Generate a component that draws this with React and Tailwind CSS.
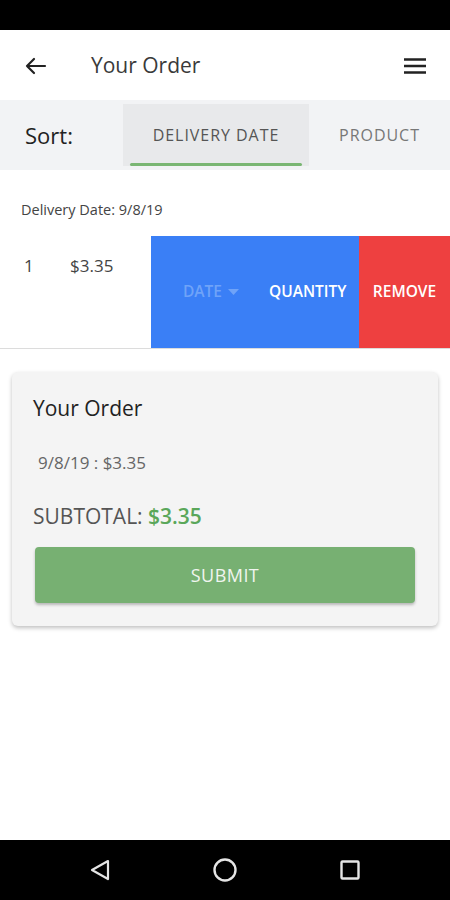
import { useState } from "react";

const font = { fontFamily: '"Open Sans", "Noto Sans", sans-serif' };

const BackArrow = () => (
  <svg width="22" height="18" viewBox="0 0 22 18" fill="none" stroke="#222" strokeWidth="2.2" strokeLinecap="round" strokeLinejoin="round">
    <path d="M20 9H2M9 2L2 9l7 7" />
  </svg>
);

const Hamburger = () => (
  <svg width="24" height="18" viewBox="0 0 24 18" fill="none" stroke="#222" strokeWidth="2.4">
    <path d="M1 2.5h22M1 9h22M1 15.5h22" />
  </svg>
);

const NavBar = () => (
  <div className="h-[60px] bg-black flex items-center justify-between px-[88px]">
    <svg width="24" height="24" viewBox="0 0 24 24" fill="none" stroke="#e5e5e5" strokeWidth="2.2" strokeLinejoin="round">
      <path d="M20 3L4 12l16 9z" />
    </svg>
    <svg width="26" height="26" viewBox="0 0 26 26" fill="none" stroke="#e5e5e5" strokeWidth="2.4">
      <circle cx="13" cy="13" r="10.5" />
    </svg>
    <svg width="24" height="24" viewBox="0 0 24 24" fill="none" stroke="#e5e5e5" strokeWidth="2.4">
      <rect x="3.5" y="3.5" width="17" height="17" rx="1" />
    </svg>
  </div>
);

export default function App() {
  const [tab, setTab] = useState("date");

  return (
    <div className="w-[450px] h-[900px] flex flex-col bg-white" style={font}>
      <div className="h-[30px] bg-black" />

      <header className="h-[70px] flex items-center pl-[25px] pr-[23px] pt-[2px]">
        <BackArrow />
        <h1 className="ml-[44px] text-[21px] text-[#3a3a3a] flex-1">Your Order</h1>
        <Hamburger />
      </header>

      <div className="h-[70px] bg-[#f2f3f5] flex items-stretch">
        <div className="w-[123px] pl-[25px] flex items-center text-[22px] text-[#222]">Sort:</div>
        <button
          onClick={() => setTab("date")}
          className={`w-[186px] mt-[4px] mb-[4px] flex flex-col items-center justify-center relative text-[16px] tracking-[0.06em] ${tab === "date" ? "bg-[#e8e9eb] text-[#555]" : "text-[#777]"}`}
        >
          DELIVERY DATE
          {tab === "date" && <span className="absolute bottom-0 left-[7px] right-[7px] h-[3px] bg-[#7ab673] rounded" />}
        </button>
        <button
          onClick={() => setTab("product")}
          className={`flex-1 mt-[4px] mb-[4px] flex items-center justify-center relative text-[16px] tracking-[0.06em] ${tab === "product" ? "bg-[#e8e9eb] text-[#555]" : "text-[#777]"}`}
        >
          PRODUCT
          {tab === "product" && <span className="absolute bottom-0 left-[7px] right-[7px] h-[3px] bg-[#7ab673] rounded" />}
        </button>
      </div>

      <main className="flex-1 flex flex-col">
        <p className="pl-[21px] pt-[29px] pb-[15px] text-[14.5px] text-[#444] leading-[22px]">Delivery Date: 9/8/19</p>

        <div className="h-[113px] flex border-b border-[#dcdcdc]">
          <div className="w-[151px] flex items-start pt-[17px] text-[17px] text-[#444]">
            <span className="pl-[24px] w-[70px]">1</span>
            <span>$3.35</span>
          </div>
          <div className="w-[208px] bg-[#3a7ff6] flex items-center text-[15.5px] font-semibold">
            <span className="pl-[32px] flex items-center gap-[6px] text-[#6fa3f8]">
              DATE
              <svg width="11" height="6" viewBox="0 0 11 6" fill="#6fa3f8"><path d="M0 0h11L5.5 6z" /></svg>
            </span>
            <span className="ml-[30px] text-white">QUANTITY</span>
          </div>
          <div className="flex-1 bg-[#ee4040] flex items-center justify-center text-[15.5px] font-semibold text-white">REMOVE</div>
        </div>

        <div className="mx-[12px] mt-[23px] bg-[#f4f4f4] rounded-md shadow-[0_2px_4px_rgba(0,0,0,0.25)] pt-[22px] pb-[23px] px-[23px]">
          <h2 className="text-[21px] text-[#222] leading-[28px] -ml-[2px]">Your Order</h2>
          <p className="pl-[3px] mt-[29px] text-[17px] text-[#666] leading-[24px]">9/8/19 : $3.35</p>
          <p className="mt-[27px] text-[21px] text-[#555] leading-[28px] -ml-[2px]">
            SUBTOTAL: <span className="text-[#5aa75a] font-semibold">$3.35</span>
          </p>
          <button className="mt-[17px] w-full h-[56px] rounded bg-[#77b072] text-[#f0f5ef] text-[18px] tracking-wide shadow-[0_2px_3px_rgba(0,0,0,0.25)]">
            SUBMIT
          </button>
        </div>
      </main>

      <NavBar />
    </div>
  );
}
